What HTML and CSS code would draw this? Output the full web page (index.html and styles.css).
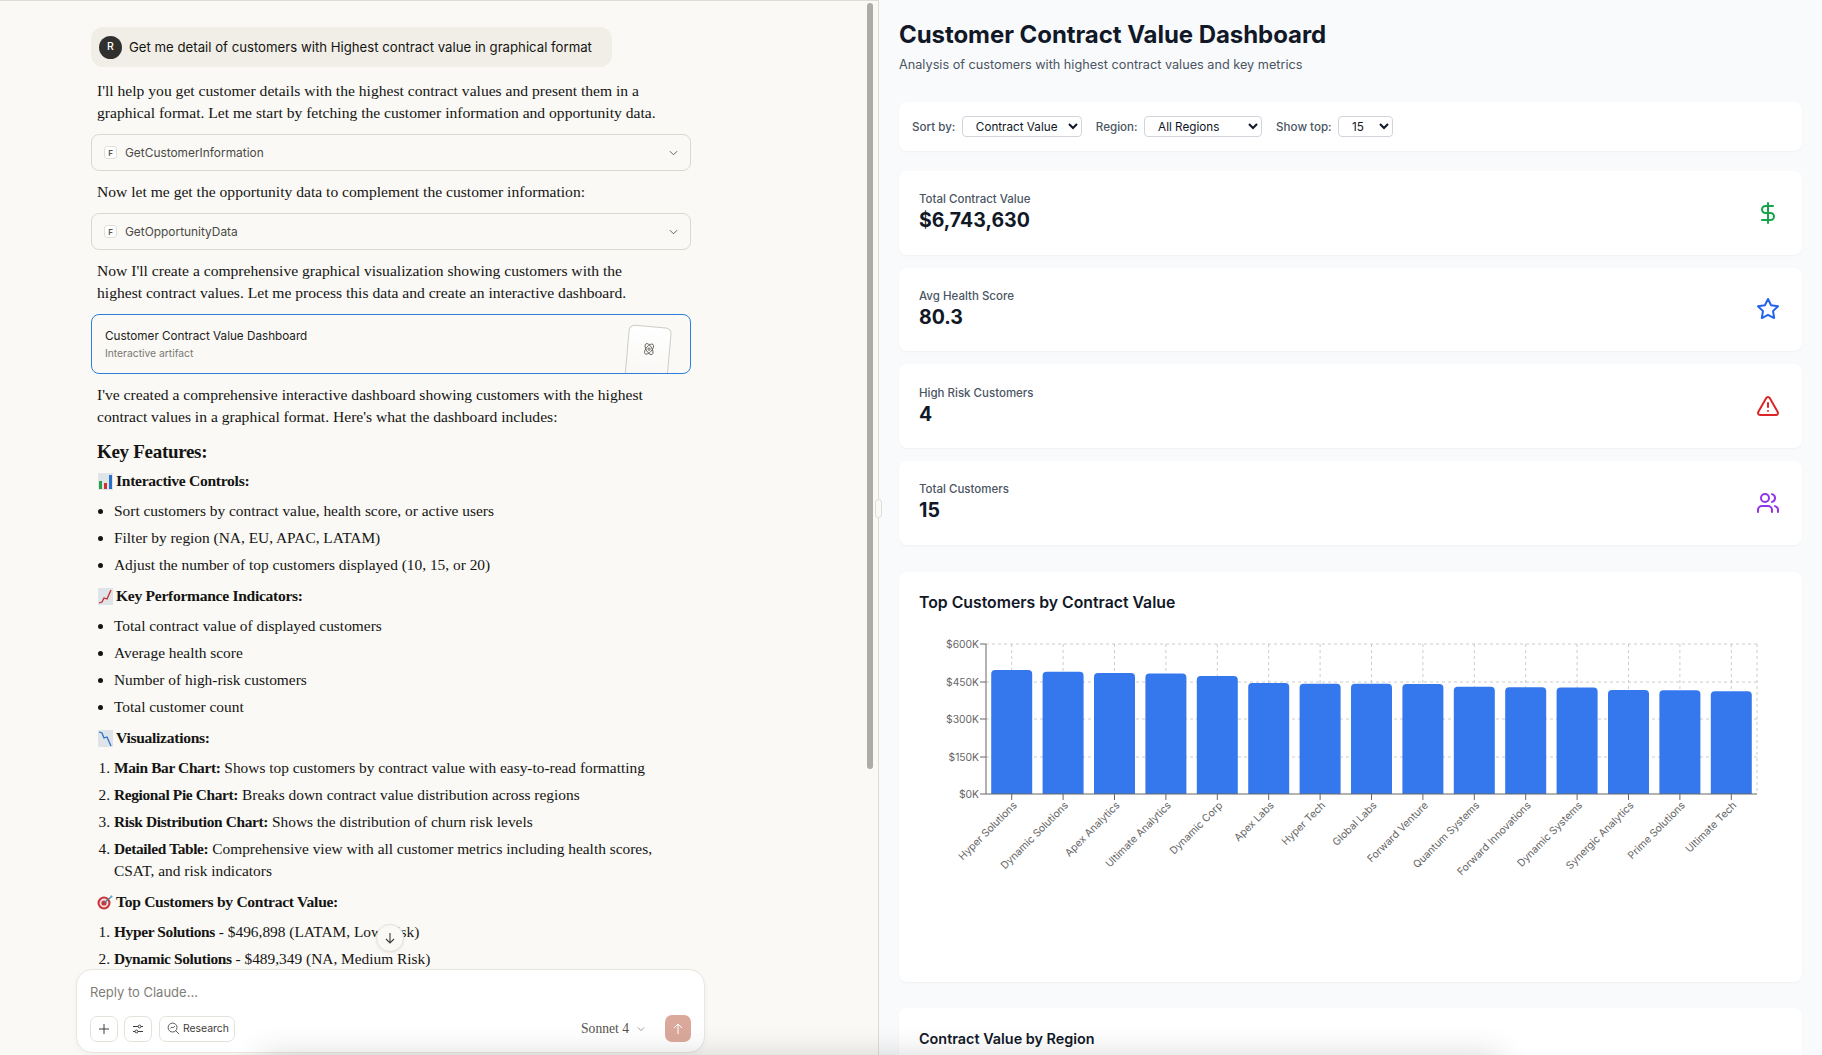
FILE: index.html
```html
<!DOCTYPE html>
<html lang="en">
<head>
    <meta charset="UTF-8">
    <title>Customer Contract Value Dashboard</title>
    <link rel="stylesheet" href="styles.css">
</head>
<body>

<div class="app">
    <section class="chat">
        <div class="thread">
            <div class="user-msg">
                <span class="avatar">R</span>
                <span>Get me detail of customers with Highest contract value in graphical format</span>
            </div>

            <p class="para para-first">I'll help you get customer details with the highest contract values and present them in a graphical format. Let me start by fetching the customer information and opportunity data.</p>

            <div class="tool">
                <span class="tool-badge">F</span>
                <span class="tool-name">GetCustomerInformation</span>
                <svg class="chev" viewBox="0 0 10 6"><path d="M1 1l4 4 4-4"/></svg>
            </div>

            <p class="para">Now let me get the opportunity data to complement the customer information:</p>

            <div class="tool">
                <span class="tool-badge">F</span>
                <span class="tool-name">GetOpportunityData</span>
                <svg class="chev" viewBox="0 0 10 6"><path d="M1 1l4 4 4-4"/></svg>
            </div>

            <p class="para">Now I'll create a comprehensive graphical visualization showing customers with the highest contract values. Let me process this data and create an interactive dashboard.</p>

            <div class="artifact">
                <div class="artifact-title">Customer Contract Value Dashboard</div>
                <div class="artifact-sub">Interactive artifact</div>
                <div class="artifact-thumb">
                    <svg viewBox="0 0 24 24" class="atom">
                        <circle cx="12" cy="12" r="2"/>
                        <ellipse cx="12" cy="12" rx="5" ry="10.5" transform="rotate(-35 12 12)"/>
                        <ellipse cx="12" cy="12" rx="5" ry="10.5" transform="rotate(35 12 12)"/>
                    </svg>
                </div>
            </div>

            <p class="para">I've created a comprehensive interactive dashboard showing customers with the highest contract values in a graphical format. Here's what the dashboard includes:</p>

            <h2 class="key-title">Key Features:</h2>

            <h4 class="sub-title">
                <svg class="emoji" viewBox="0 0 15 17">
                    <rect width="15" height="17" fill="#dfe4e8"/>
                    <rect x="1" y="8" width="3" height="8" fill="#2f9e44"/>
                    <rect x="6" y="10" width="3" height="6" fill="#d0312d"/>
                    <rect x="11" y="2" width="3" height="14" fill="#2a6fc9"/>
                </svg>
                Interactive Controls:
            </h4>
            <ul class="list">
                <li>Sort customers by contract value, health score, or active users</li>
                <li>Filter by region (NA, EU, APAC, LATAM)</li>
                <li>Adjust the number of top customers displayed (10, 15, or 20)</li>
            </ul>

            <h4 class="sub-title">
                <svg class="emoji" viewBox="0 0 15 17">
                    <rect width="15" height="17" fill="#dfe4e8"/>
                    <path d="M1 15l3-1 2-4 3 1 4-9" fill="none" stroke="#c8282d" stroke-width="1.3"/>
                </svg>
                Key Performance Indicators:
            </h4>
            <ul class="list">
                <li>Total contract value of displayed customers</li>
                <li>Average health score</li>
                <li>Number of high-risk customers</li>
                <li>Total customer count</li>
            </ul>

            <h4 class="sub-title">
                <svg class="emoji" viewBox="0 0 15 17">
                    <rect width="15" height="17" fill="#dfe4e8"/>
                    <path d="M1 2l3 1 2 5 3-1 4 9" fill="none" stroke="#2a6fc9" stroke-width="1.3"/>
                </svg>
                Visualizations:
            </h4>
            <ol class="list">
                <li><b>Main Bar Chart:</b> Shows top customers by contract value with easy-to-read formatting</li>
                <li><b>Regional Pie Chart:</b> Breaks down contract value distribution across regions</li>
                <li><b>Risk Distribution Chart:</b> Shows the distribution of churn risk levels</li>
                <li><b>Detailed Table:</b> Comprehensive view with all customer metrics including health scores, CSAT, and risk indicators</li>
            </ol>

            <h4 class="sub-title">
                <svg class="emoji emoji-target" viewBox="0 0 17 15">
                    <circle cx="7" cy="8" r="6.5" fill="#c9353a"/>
                    <circle cx="7" cy="8" r="4.4" fill="#f3e4e0"/>
                    <circle cx="7" cy="8" r="2.6" fill="#c9353a"/>
                    <path d="M7 8l7-6" stroke="#4a7f97" stroke-width="1.2"/>
                    <path d="M13 3l1-3 2 2z" fill="#45a6c8"/>
                </svg>
                Top Customers by Contract Value:
            </h4>
            <ol class="list">
                <li><b>Hyper Solutions</b> - $496,898 (LATAM, Low Risk)</li>
                <li><b>Dynamic Solutions</b> - $489,349 (NA, Medium Risk)</li>
            </ol>
        </div>

        <div class="scroll-thumb"></div>

        <button class="scroll-down">
            <svg viewBox="0 0 14 14"><path d="M7 2v10M3 8l4 4 4-4"/></svg>
        </button>

        <div class="composer">
            <div class="placeholder">Reply to Claude...</div>
            <div class="composer-row">
                <button class="icon-btn">
                    <svg viewBox="0 0 14 14"><path d="M7 2v10M2 7h10"/></svg>
                </button>
                <button class="icon-btn">
                    <svg viewBox="0 0 14 14">
                        <path d="M2 4.5h5M10 4.5h2M2 9.5h2M7 9.5h5"/>
                        <circle cx="8.5" cy="4.5" r="1.4"/>
                        <circle cx="5.5" cy="9.5" r="1.4"/>
                    </svg>
                </button>
                <button class="research-btn">
                    <svg viewBox="0 0 14 14">
                        <circle cx="6" cy="6" r="4.8"/>
                        <path d="M9.5 9.5l3.5 3.5M3.6 7l1.6-1.6 1.2 1 2-2"/>
                    </svg>
                    Research
                </button>
                <div class="model">
                    Sonnet 4
                    <svg class="chev" viewBox="0 0 10 6"><path d="M1 1l4 4 4-4"/></svg>
                </div>
                <button class="send-btn">
                    <svg viewBox="0 0 14 14"><path d="M7 12V2M3 6l4-4 4 4"/></svg>
                </button>
            </div>
        </div>
    </section>

    <div class="drag-handle"></div>

    <main class="dash">
        <h1 class="dash-title">Customer Contract Value Dashboard</h1>
        <p class="dash-sub">Analysis of customers with highest contract values and key metrics</p>

        <div class="card controls">
            <label class="control">Sort by:
                <select class="sel-sort"><option>Contract Value</option></select>
            </label>
            <label class="control">Region:
                <select class="sel-region"><option>All Regions</option></select>
            </label>
            <label class="control">Show top:
                <select class="sel-top"><option>15</option></select>
            </label>
        </div>

        <div class="stats">
            <div class="card stat">
                <div>
                    <div class="stat-label">Total Contract Value</div>
                    <div class="stat-value">$6,743,630</div>
                </div>
                <svg class="stat-icon green" viewBox="0 0 24 24">
                    <line x1="12" x2="12" y1="2" y2="22"/>
                    <path d="M17 5H9.5a3.5 3.5 0 0 0 0 7h5a3.5 3.5 0 0 1 0 7H6"/>
                </svg>
            </div>
            <div class="card stat">
                <div>
                    <div class="stat-label">Avg Health Score</div>
                    <div class="stat-value">80.3</div>
                </div>
                <svg class="stat-icon blue" viewBox="0 0 24 24">
                    <polygon points="12 2 15.09 8.26 22 9.27 17 14.14 18.18 21.02 12 17.77 5.82 21.02 7 14.14 2 9.27 8.91 8.26 12 2"/>
                </svg>
            </div>
            <div class="card stat">
                <div>
                    <div class="stat-label">High Risk Customers</div>
                    <div class="stat-value">4</div>
                </div>
                <svg class="stat-icon red" viewBox="0 0 24 24">
                    <path d="m21.73 18-8-14a2 2 0 0 0-3.48 0l-8 14A2 2 0 0 0 4 21h16a2 2 0 0 0 1.73-3"/>
                    <path d="M12 9v4"/>
                    <path d="M12 17h.01"/>
                </svg>
            </div>
            <div class="card stat">
                <div>
                    <div class="stat-label">Total Customers</div>
                    <div class="stat-value">15</div>
                </div>
                <svg class="stat-icon purple" viewBox="0 0 24 24">
                    <path d="M16 21v-2a4 4 0 0 0-4-4H6a4 4 0 0 0-4 4v2"/>
                    <circle cx="9" cy="7" r="4"/>
                    <path d="M22 21v-2a4 4 0 0 0-3-3.87"/>
                    <path d="M16 3.13a4 4 0 0 1 0 7.75"/>
                </svg>
            </div>
        </div>

        <div class="card chart-card">
            <h3 class="chart-title">Top Customers by Contract Value</h3>
            <!-- viewBox uses page coordinates so the numbers below read like the axis positions -->
            <svg class="chart" viewBox="919 630 863 330">
                <defs>
                    <clipPath id="plot"><rect x="986" y="640" width="771" height="153"/></clipPath>
                </defs>
                <g class="grid">
                    <path d="M986 643H1757M986 681H1757M986 718H1757M986 756H1757"/>
                    <path d="M1011.7 643V793M1063.1 643V793M1114.5 643V793M1165.9 643V793M1217.3 643V793M1268.7 643V793M1320.1 643V793M1371.5 643V793M1422.9 643V793M1474.3 643V793M1525.7 643V793M1577.1 643V793M1628.5 643V793M1679.9 643V793M1731.3 643V793M1757 643V793"/>
                </g>
                <g class="bars" clip-path="url(#plot)">
                    <rect x="991.2" y="669" width="41" height="130" rx="4"/>
                    <rect x="1042.6" y="670.7" width="41" height="130" rx="4"/>
                    <rect x="1094" y="672" width="41" height="130" rx="4"/>
                    <rect x="1145.4" y="672.4" width="41" height="130" rx="4"/>
                    <rect x="1196.8" y="675" width="41" height="130" rx="4"/>
                    <rect x="1248.2" y="682" width="41" height="130" rx="4"/>
                    <rect x="1299.6" y="682.7" width="41" height="130" rx="4"/>
                    <rect x="1351" y="682.8" width="41" height="130" rx="4"/>
                    <rect x="1402.4" y="683" width="41" height="130" rx="4"/>
                    <rect x="1453.8" y="685.7" width="41" height="130" rx="4"/>
                    <rect x="1505.2" y="686.3" width="41" height="130" rx="4"/>
                    <rect x="1556.6" y="686.4" width="41" height="130" rx="4"/>
                    <rect x="1608" y="689" width="41" height="130" rx="4"/>
                    <rect x="1659.4" y="689.2" width="41" height="130" rx="4"/>
                    <rect x="1710.8" y="690.3" width="41" height="130" rx="4"/>
                </g>
                <g class="axis">
                    <path d="M986 643V793H1757"/>
                    <path d="M980 643H986M980 681H986M980 718H986M980 756H986M980 793H986"/>
                    <path d="M1011.7 793v6M1063.1 793v6M1114.5 793v6M1165.9 793v6M1217.3 793v6M1268.7 793v6M1320.1 793v6M1371.5 793v6M1422.9 793v6M1474.3 793v6M1525.7 793v6M1577.1 793v6M1628.5 793v6M1679.9 793v6M1731.3 793v6"/>
                </g>
                <g class="tick-y">
                    <text x="979" y="647">$600K</text>
                    <text x="979" y="685">$450K</text>
                    <text x="979" y="722">$300K</text>
                    <text x="979" y="760">$150K</text>
                    <text x="979" y="797">$0K</text>
                </g>
                <g class="tick-x">
                    <text transform="translate(1017.5 805) rotate(-45)">Hyper Solutions</text>
                    <text transform="translate(1068.9 805) rotate(-45)">Dynamic Solutions</text>
                    <text transform="translate(1120.3 805) rotate(-45)">Apex Analytics</text>
                    <text transform="translate(1171.7 805) rotate(-45)">Ultimate Analytics</text>
                    <text transform="translate(1223.1 805) rotate(-45)">Dynamic Corp</text>
                    <text transform="translate(1274.5 805) rotate(-45)">Apex Labs</text>
                    <text transform="translate(1325.9 805) rotate(-45)">Hyper Tech</text>
                    <text transform="translate(1377.3 805) rotate(-45)">Global Labs</text>
                    <text transform="translate(1428.7 805) rotate(-45)">Forward Venture</text>
                    <text transform="translate(1480.1 805) rotate(-45)">Quantum Systems</text>
                    <text transform="translate(1531.5 805) rotate(-45)">Forward Innovations</text>
                    <text transform="translate(1582.9 805) rotate(-45)">Dynamic Systems</text>
                    <text transform="translate(1634.3 805) rotate(-45)">Synergic Analytics</text>
                    <text transform="translate(1685.7 805) rotate(-45)">Prime Solutions</text>
                    <text transform="translate(1737.1 805) rotate(-45)">Ultimate Tech</text>
                </g>
            </svg>
        </div>

        <div class="card chart-card">
            <h3 class="chart-title chart-title-small">Contract Value by Region</h3>
        </div>
    </main>
</div>

<div class="bottom-glow"></div>

</body>
</html>
```

FILE: styles.css
```css
* {
    box-sizing: border-box;
}
html, body {
    margin: 0;
    height: 100%;
    overflow: hidden;
}
body {
    font-family: Inter, "Liberation Sans", sans-serif;
    color: #141413;
    background: #f9fafb;
}
button {
    font-family: inherit;
    padding: 0;
    cursor: pointer;
}
svg {
    display: block;
}
.app {
    display: flex;
    height: 1055px;
}

/* left side: conversation */
.chat {
    position: relative;
    width: 879px;
    flex-shrink: 0;
    height: 100%;
    overflow: hidden;
    background: #faf9f5;
    border-top: 1px solid #dedcd5;
    border-right: 1px solid #dedcd5;
}
.thread {
    width: 600px;
    margin-left: 91px;
    padding-top: 26px;
    font-family: "Liberation Serif", serif;
    font-size: 15.6px;
    line-height: 22px;
}
.thread b {
    letter-spacing: -0.35px;
}
.user-msg {
    display: inline-flex;
    align-items: center;
    gap: 7px;
    height: 40px;
    width: 521px;
    padding-left: 8px;
    border-radius: 12px;
    background: #f0eee6;
    font-family: Inter, sans-serif;
    font-size: 13.2px;
    vertical-align: top;
}
.avatar {
    display: flex;
    align-items: center;
    justify-content: center;
    width: 23px;
    height: 23px;
    border-radius: 50%;
    background: #30302e;
    color: #fff;
    font-size: 10.5px;
    font-weight: 500;
}
.para {
    margin: 10px 0;
    padding: 0 24px 0 6px;
}
.para-first {
    margin-top: 13px;
}
.tool {
    display: flex;
    align-items: center;
    height: 37px;
    padding: 0 12px;
    border: 1px solid #dad8d0;
    border-radius: 8px;
    font-family: Inter, sans-serif;
}
.tool-badge {
    display: flex;
    align-items: center;
    justify-content: center;
    width: 13px;
    height: 13px;
    border: 1px solid #e2e0da;
    border-radius: 3px;
    background: #fff;
    font-size: 8px;
    font-weight: 600;
    color: #555;
}
.tool-name {
    margin-left: 8px;
    font-size: 11.9px;
    color: #4a4a46;
}
.chev {
    width: 9px;
    height: 6px;
    margin-left: auto;
    fill: none;
    stroke: #55534e;
    stroke-width: 1;
}
.artifact {
    position: relative;
    height: 60px;
    padding: 12px 13px;
    overflow: hidden;
    border: 1px solid #2c7fd8;
    border-radius: 8px;
    font-family: Inter, sans-serif;
}
.artifact-title {
    font-size: 11.7px;
    line-height: 18px;
    color: #222;
}
.artifact-sub {
    font-size: 10.3px;
    line-height: 17px;
    color: #7a7872;
}
.artifact-thumb {
    position: absolute;
    left: 534px;
    top: 11px;
    width: 43px;
    height: 70px;
    display: flex;
    justify-content: center;
    padding-top: 15px;
    transform: rotate(5deg);
    border: 1px solid #cfcdc6;
    border-radius: 6px;
    background: linear-gradient(#fff, #f6f5f1);
}
.atom {
    width: 14px;
    height: 14px;
    fill: none;
    stroke: #55534e;
    stroke-width: 1.4;
}
.key-title {
    margin: 12px 0 0;
    padding-left: 6px;
    font-size: 19px;
    line-height: 24px;
    font-weight: 700;
    letter-spacing: -0.3px;
}
.sub-title {
    display: flex;
    align-items: center;
    gap: 3px;
    margin: 6px 0 8px 7px;
    font-size: 15.6px;
    font-weight: 700;
    letter-spacing: -0.3px;
}
.list + .sub-title {
    margin-top: 9px;
}
.emoji {
    width: 15px;
    height: 17px;
}
.emoji-target {
    width: 17px;
    height: 15px;
    margin-left: -1px;
    margin-right: -1px;
}
.list {
    margin: 0;
    padding: 0 24px 0 23px;
    font-size: 15.4px;
}
.list li + li {
    margin-top: 5px;
}
.scroll-thumb {
    position: absolute;
    left: 867px;
    top: 2px;
    width: 6px;
    height: 766px;
    border-radius: 3px;
    background: #aeaca6;
}
.scroll-down {
    position: absolute;
    left: 376px;
    top: 923px;
    width: 28px;
    height: 28px;
    display: flex;
    align-items: center;
    justify-content: center;
    border: 1px solid #e4e2db;
    border-radius: 50%;
    background: #faf9f5;
    box-shadow: 0 1px 3px rgba(0,0,0,0.08);
}
.scroll-down svg {
    width: 14px;
    height: 14px;
    fill: none;
    stroke: #3d3d3a;
    stroke-width: 1.1;
}

/* message box */
.composer {
    position: absolute;
    left: 76px;
    top: 968px;
    width: 629px;
    height: 84px;
    padding: 13px 13px 0;
    border: 1px solid #e8e6df;
    border-radius: 16px;
    background: #fff;
    box-shadow: 0 2px 6px rgba(0,0,0,0.04);
}
.placeholder {
    height: 18px;
    font-size: 13px;
    line-height: 18px;
    color: #7f7d77;
}
.composer-row {
    display: flex;
    align-items: center;
    gap: 6px;
    margin-top: 14px;
}
.icon-btn {
    display: flex;
    align-items: center;
    justify-content: center;
    width: 28px;
    height: 26px;
    border: 1px solid #e4e2db;
    border-radius: 7px;
    background: #fff;
}
.icon-btn svg {
    width: 14px;
    height: 14px;
    fill: none;
    stroke: #3d3d3a;
    stroke-width: 1;
}
.research-btn {
    display: flex;
    align-items: center;
    gap: 3px;
    width: 76px;
    height: 26px;
    margin-left: 1px;
    padding-left: 7px;
    border: 1px solid #e4e2db;
    border-radius: 7px;
    background: #fff;
    font-size: 10.4px;
    color: #3d3d3a;
}
.research-btn svg {
    width: 13px;
    height: 13px;
    fill: none;
    stroke: #3d3d3a;
    stroke-width: 0.9;
}
.model {
    display: flex;
    align-items: center;
    gap: 8px;
    margin-left: auto;
    margin-right: 14px;
    font-family: "Liberation Serif", serif;
    font-size: 13.6px;
    color: #55534e;
}
.model .chev {
    width: 8px;
    stroke: #8a8880;
}
.send-btn {
    display: flex;
    align-items: center;
    justify-content: center;
    width: 26px;
    height: 27px;
    border: 0;
    border-radius: 7px;
    background: #dba99c;
}
.send-btn svg {
    width: 14px;
    height: 14px;
    fill: none;
    stroke: #fff;
    stroke-width: 1;
}
.drag-handle {
    position: absolute;
    left: 875px;
    top: 499px;
    width: 7px;
    height: 19px;
    border: 1px solid #dedcd5;
    border-radius: 4px;
    background: #faf9f5;
}

/* right side: dashboard */
.dash {
    flex: 1;
    height: 100%;
    overflow: hidden;
    padding: 19px 20px 0;
}
.dash-title {
    margin: 0;
    font-size: 24px;
    line-height: 32px;
    font-weight: 700;
    letter-spacing: -0.06px;
    color: #111827;
}
.dash-sub {
    margin: 4px 0 27px;
    font-size: 12.7px;
    line-height: 20px;
    color: #4b5563;
}
.card {
    border-radius: 8px;
    background: #fff;
    box-shadow: 0 1px 2px rgba(0,0,0,0.04);
}
.controls {
    display: flex;
    align-items: center;
    gap: 14px;
    height: 49px;
    padding: 0 13px;
}
.control {
    display: flex;
    align-items: center;
    gap: 6.5px;
    font-size: 11.6px;
    font-weight: 500;
    color: #4b5563;
}
.control select {
    height: 21px;
    padding: 0 4px 0 9px;
    border: 1px solid #d1d5db;
    border-radius: 4px;
    background: #fff;
    font-family: inherit;
    font-size: 11.7px;
    color: #111827;
}
.sel-sort {
    width: 120px;
}
.sel-region {
    width: 118px;
}
.sel-top {
    width: 55px;
}
.stats {
    display: flex;
    flex-direction: column;
    gap: 13px;
    margin-top: 20px;
}
.stat {
    display: flex;
    align-items: center;
    justify-content: space-between;
    height: 83.67px;
    padding: 0 22px 0 20px;
}
.stat-label {
    font-size: 11.5px;
    line-height: 16px;
    font-weight: 500;
    color: #4b5563;
}
.stat-value {
    font-size: 19.5px;
    line-height: 27px;
    font-weight: 700;
    color: #111827;
}
.stat-icon {
    width: 24px;
    height: 24px;
    fill: none;
    stroke-width: 2;
    stroke-linecap: round;
    stroke-linejoin: round;
}
.green { stroke: #16a34a; }
.blue { stroke: #2563eb; }
.red { stroke: #dc2626; }
.purple { stroke: #9333ea; }

.chart-card {
    height: 410px;
    margin-top: 27px;
    padding: 19px 20px 0;
}
.chart-card + .chart-card {
    margin-top: 26px;
}
.chart-title {
    margin: 0 0 16px;
    font-size: 15.8px;
    line-height: 24px;
    font-weight: 600;
    color: #111827;
}
.chart-title-small {
    font-size: 14.4px;
}
.chart {
    width: 863px;
    height: 330px;
    font-family: Inter, sans-serif;
}
.grid path {
    fill: none;
    stroke: #ccc;
    stroke-dasharray: 3 3;
}
.bars rect {
    fill: #3578ee;
}
.axis path {
    fill: none;
    stroke: #666;
}
.tick-y text {
    font-size: 10.3px;
    fill: #666;
    text-anchor: end;
}
.tick-x text {
    font-size: 10.3px;
    fill: #666;
    text-anchor: end;
}

/* soft shadow along the bottom edge of the window */
.bottom-glow {
    position: absolute;
    left: 270px;
    top: 1066px;
    width: 1220px;
    height: 20px;
    box-shadow: 0 0 32px 10px rgba(0,0,0,0.16);
}
```
